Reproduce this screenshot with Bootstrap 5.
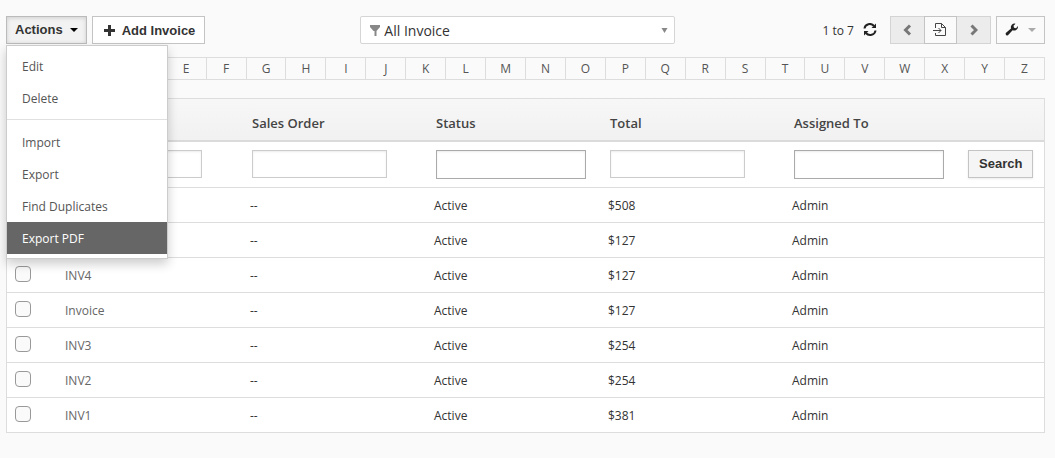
<!DOCTYPE html>
<html lang="en">
<head>
<meta charset="utf-8">
<meta name="viewport" content="width=device-width, initial-scale=1">
<title>Invoices</title>
<link href="https://cdn.jsdelivr.net/npm/bootstrap@5.3.0/dist/css/bootstrap.min.css" rel="stylesheet">
<style>
  body { background: #fafafa; color: #333; font-family: "Open Sans", "Noto Sans", sans-serif; font-size: 12px; line-height: 20px; }
  .page { padding: 16px 10px 16px 6px; }
  .gap-btn { gap: 5px; }

  /* square grey buttons */
  .tool { --bs-btn-color: #333; --bs-btn-bg: #fff; --bs-btn-border-color: #c4c4c4; --bs-btn-border-radius: 0;
    --bs-btn-hover-color: #333; --bs-btn-hover-bg: #f3f3f3; --bs-btn-hover-border-color: #bbb;
    --bs-btn-padding-x: 8px; --bs-btn-padding-y: 0; --bs-btn-font-size: 13px; --bs-btn-font-weight: 700;
    --bs-btn-disabled-color: #777; --bs-btn-disabled-bg: #ececec; --bs-btn-disabled-border-color: #d4d4d4; --bs-btn-disabled-opacity: 1;
    --bs-btn-line-height: 26px; font-family: "Liberation Sans", Arial, sans-serif; height: 28px; display: inline-flex; align-items: center; }
  .tool.show { --bs-btn-active-color: #333; --bs-btn-active-bg: #f2f2f2; --bs-btn-active-border-color: #bbb; box-shadow: inset 0 1px 4px rgba(0,0,0,.15); }
  .tool.dropdown-toggle::after { border-width: 4px 4px 0; margin-left: 7px; color: #000; }
  .tool-light.dropdown-toggle::after { color: #aaa; margin-left: 9px; }
  .tool-page { --bs-btn-bg: #fafafa; }
  .add-btn { --bs-btn-padding-x: 9px; padding-top: 2px; }
  .pager .btn { width: 35px; justify-content: center; }
  .pager .tool-page { width: 33px; z-index: 2; }

  /* actions menu */
  .actions-menu { --bs-dropdown-min-width: 162px; --bs-dropdown-padding-y: 4px; --bs-dropdown-font-size: 12px; --bs-dropdown-border-radius: 0;
    --bs-dropdown-border-color: #ccc; --bs-dropdown-link-color: #555; --bs-dropdown-item-padding-x: 15px;
    --bs-dropdown-divider-margin-y: 5px; --bs-dropdown-divider-bg: #e0e0e0; --bs-dropdown-link-active-bg: #666;
    top: 100%; margin-top: 1px; box-shadow: 0 5px 10px rgba(0,0,0,.2); }
  .actions-menu .dropdown-item { padding-top: 7px; padding-bottom: 5px; }
  .actions-menu .dropdown-divider { margin-bottom: 6px; opacity: 1; }

  /* view filter */
  .filter-box { max-width: 315px; }
  .filter-box .form-select { height: 28px; padding: 2px 24px 0 23px; font-size: 14px; line-height: 24px; color: #333; border-color: #d5d5d5; border-radius: 2px; background-image: none; }
  .filter-icon, .filter-caret { top: 50%; transform: translateY(-50%); pointer-events: none; }
  .filter-icon { left: 10px; }
  .filter-caret { right: 7px; }
  .range { padding-top: 2px; }

  .alphabet { margin-top: 13px; border: 1px solid #ddd; }
  .alphabet .nav-link { flex: 1 1 0; padding: 0; line-height: 21px; text-align: center; color: #555; border-left: 1px solid #ddd; }
  .alphabet .nav-link:first-child { border-left: 0; }

  /* invoice list */
  .list-wrap { margin-top: 18px; border: 1px solid #ddd; background: #fff; }
  .list { --bs-table-color: #333; --bs-table-bg: transparent; table-layout: fixed; min-width: 900px; }
  .list > :not(caption) > * > * { border-bottom: 1px solid #ddd; padding: 8px 8px 6px; color: #333; box-shadow: none; }
  .list > thead > tr > th { height: 42px; padding: 7px 10px 0; vertical-align: middle; font-size: 13px; font-weight: 600; color: #444; border-bottom: 2px solid #dadada; }
  .list thead { background: linear-gradient(#f7f7f7, #f1f1f1); }
  .list > tbody > .search-row > td { padding: 8px 10px; height: 46px; vertical-align: top; }
  .list tbody tr:last-child > td { border-bottom: 0; }
  .list a { color: #666; text-decoration: none; }
  .list .form-control { width: 135px; height: 28px; padding: 2px 6px; font-size: 12px; border: 1px solid #ccc; border-radius: 0; box-shadow: inset 0 1px 2px rgba(0,0,0,.08); }
  .list .form-control.pick { width: 150px; height: 29px; border-color: #aaa; }
  .list .form-check-input { display: block; width: 16px; height: 16px; margin: 0; border: 1px solid #999; border-radius: 4px; background-color: #fafafa; }
  .search-btn { --bs-btn-bg: #f5f5f5; --bs-btn-padding-x: 10px; box-shadow: 0 1px 2px rgba(0,0,0,.08); }
</style>
</head>
<body>
<main class="page">
  <div class="row g-0">
    <div class="col-4 d-flex gap-btn">
      <div class="dropdown">
        <button type="button" class="btn tool dropdown-toggle show" data-bs-toggle="dropdown" data-bs-display="static" aria-expanded="true">Actions</button>
        <ul class="dropdown-menu actions-menu show">
          <li><a class="dropdown-item" href="#">Edit</a></li>
          <li><a class="dropdown-item" href="#">Delete</a></li>
          <li><hr class="dropdown-divider"></li>
          <li><a class="dropdown-item" href="#">Import</a></li>
          <li><a class="dropdown-item" href="#">Export</a></li>
          <li><a class="dropdown-item" href="#">Find Duplicates</a></li>
          <li><a class="dropdown-item active" href="#">Export PDF</a></li>
        </ul>
      </div>
      <div>
        <button type="button" class="btn tool add-btn">
          <svg class="me-1" width="16" height="14" viewBox="0 0 16 14" aria-hidden="true"><path d="M6 1h3v4h4v3H9v4H6V8H2V5h4z" fill="#333"/></svg>Add Invoice</button>
      </div>
    </div>

    <div class="col-4 ps-2">
      <div class="filter-box position-relative">
        <select class="form-select" aria-label="View"><option>All Invoice</option></select>
        <svg class="filter-icon position-absolute" width="10" height="12" viewBox="0 0 10 12" aria-hidden="true"><path d="M0 1h10v2L6.500 7v5h-2V7h-1L0 3z" fill="#888"/></svg>
        <svg class="filter-caret position-absolute" width="7" height="6" viewBox="0 0 7 6" aria-hidden="true"><path d="M.5 1h6l-3 5z" fill="#888"/></svg>
      </div>
    </div>

    <div class="col-4 d-flex justify-content-end align-items-center gap-btn">
      <span class="me-1 range">1 to 7</span>
      <a href="#" class="d-flex me-2" aria-label="Refresh">
        <svg width="14" height="14" viewBox="0 0 14 14" fill="none" stroke="#222" stroke-width="2" aria-hidden="true"><path d="M1.500 5.500A5.300 5 0 0 1 11 3M12.500 7.500A5.300 5 0 0 1 3 10"/><path d="M13 .5V5H8.500zM1 12.500V8h4.500z" fill="#222" stroke="none"/></svg>
      </a>
      <div class="btn-group pager">
        <button type="button" class="btn tool" disabled aria-label="Previous page"><svg width="9" height="12" viewBox="0 0 9 12" fill="none" stroke="#777" stroke-width="3" aria-hidden="true"><path d="M7 1.500 2.500 6 7 10.500"/></svg></button>
        <button type="button" class="btn tool tool-page" aria-label="Go to page"><svg width="14" height="14" viewBox="0 0 14 14" fill="none" stroke="#444" aria-hidden="true"><path d="M2.500 5V.5h6l4 4v8h-10V10M8.500.5v4h4M0 7.500h8M5.500 5 8 7.500 5.500 10"/></svg></button>
        <button type="button" class="btn tool" disabled aria-label="Next page"><svg width="9" height="12" viewBox="0 0 9 12" fill="none" stroke="#777" stroke-width="3" aria-hidden="true"><path d="M2.500 1.500 7 6l-4.500 4.500"/></svg></button>
      </div>
      <button type="button" class="btn tool tool-page tool-light dropdown-toggle" aria-label="Settings"><svg width="14" height="14" viewBox="0 0 14 14" aria-hidden="true"><path d="M13 4a3.800 3.800 0 0 1-5.400 3.200L3 12.300A1.700 1.700 0 0 1 .8 10L6 5.600A3.800 3.800 0 0 1 10.500.7L8.500 2.800l.5 2 2 .4L13 3z" fill="#222"/></svg></button>
    </div>
  </div>

  <nav class="nav flex-nowrap alphabet" aria-label="Filter by letter">
    <a class="nav-link" href="#" aria-label="A"></a><a class="nav-link" href="#" aria-label="B"></a><a class="nav-link" href="#" aria-label="C"></a><a class="nav-link" href="#" aria-label="D"></a><a class="nav-link" href="#">E</a><a class="nav-link" href="#">F</a><a class="nav-link" href="#">G</a><a class="nav-link" href="#">H</a><a class="nav-link" href="#">I</a><a class="nav-link" href="#">J</a><a class="nav-link" href="#">K</a><a class="nav-link" href="#">L</a><a class="nav-link" href="#">M</a><a class="nav-link" href="#">N</a><a class="nav-link" href="#">O</a><a class="nav-link" href="#">P</a><a class="nav-link" href="#">Q</a><a class="nav-link" href="#">R</a><a class="nav-link" href="#">S</a><a class="nav-link" href="#">T</a><a class="nav-link" href="#">U</a><a class="nav-link" href="#">V</a><a class="nav-link" href="#">W</a><a class="nav-link" href="#">X</a><a class="nav-link" href="#">Y</a><a class="nav-link" href="#">Z</a>
  </nav>

  <div class="table-responsive list-wrap">
    <table class="table list mb-0">
      <colgroup><col width="50"><col width="185"><col width="184"><col width="174"><col width="184"><col width="174"><col width="86"></colgroup>
      <thead>
        <tr><th></th><th></th><th scope="col">Sales Order</th><th scope="col">Status</th><th scope="col">Total</th><th scope="col">Assigned To</th><th></th></tr>
      </thead>
      <tbody>
        <tr class="search-row">
          <td></td>
          <td><input type="text" class="form-control" aria-label="Search by name"></td>
          <td><input type="text" class="form-control" aria-label="Search by sales order"></td>
          <td><input type="text" class="form-control pick" aria-label="Search by status"></td>
          <td><input type="text" class="form-control" aria-label="Search by total"></td>
          <td><input type="text" class="form-control pick" aria-label="Search by assignee"></td>
          <td><button type="button" class="btn tool search-btn">Search</button></td>
        </tr>
        <tr><td><input type="checkbox" class="form-check-input" aria-label="Select row 1"></td><td></td><td>--</td><td>Active</td><td>$508</td><td>Admin</td><td></td></tr>
        <tr><td><input type="checkbox" class="form-check-input" aria-label="Select row 2"></td><td></td><td>--</td><td>Active</td><td>$127</td><td>Admin</td><td></td></tr>
        <tr><td><input type="checkbox" class="form-check-input" aria-label="Select INV4"></td><td><a href="#">INV4</a></td><td>--</td><td>Active</td><td>$127</td><td>Admin</td><td></td></tr>
        <tr><td><input type="checkbox" class="form-check-input" aria-label="Select Invoice"></td><td><a href="#">Invoice</a></td><td>--</td><td>Active</td><td>$127</td><td>Admin</td><td></td></tr>
        <tr><td><input type="checkbox" class="form-check-input" aria-label="Select INV3"></td><td><a href="#">INV3</a></td><td>--</td><td>Active</td><td>$254</td><td>Admin</td><td></td></tr>
        <tr><td><input type="checkbox" class="form-check-input" aria-label="Select INV2"></td><td><a href="#">INV2</a></td><td>--</td><td>Active</td><td>$254</td><td>Admin</td><td></td></tr>
        <tr><td><input type="checkbox" class="form-check-input" aria-label="Select INV1"></td><td><a href="#">INV1</a></td><td>--</td><td>Active</td><td>$381</td><td>Admin</td><td></td></tr>
      </tbody>
    </table>
  </div>
</main>
<script src="https://cdn.jsdelivr.net/npm/bootstrap@5.3.0/dist/js/bootstrap.bundle.min.js"></script>
</body>
</html>
